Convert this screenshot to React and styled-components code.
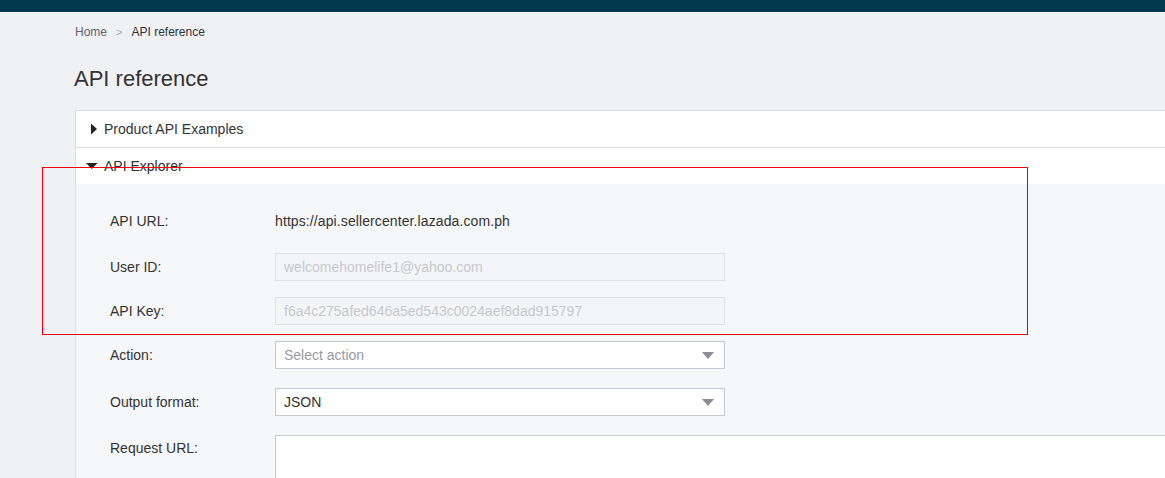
import React from "react";
import styled, { createGlobalStyle } from "styled-components";

const GlobalStyle = createGlobalStyle`
  html, body {
    margin: 0;
    padding: 0;
    overflow: hidden;
    background: #f0f1f5;
    font-family: "Liberation Sans", Arial, sans-serif;
    color: #333;
  }
`;

const Page = styled.div`
  position: relative;
  width: 1165px;
  height: 478px;
  overflow: hidden;
`;

const TopBar = styled.div`
  height: 12px;
  background: #013a4e;
`;

const Main = styled.div`
  padding-left: 74px;
`;

const Breadcrumb = styled.div`
  display: flex;
  align-items: center;
  column-gap: 9px;
  padding: 8px 0 0 1px;
  height: 24px;
  font-size: 12px;
  line-height: 14px;
`;

const Crumb = styled.span`
  color: ${(p) => (p.$current ? "#333" : "#61637a")};
`;

const Sep = styled.span`
  color: #a5a6b0;
  font-size: 11px;
`;

const Title = styled.h1`
  margin: 0;
  padding-top: 22px;
  height: 44px;
  font-size: 22px;
  line-height: 26px;
  font-weight: 400;
  color: #333;
`;

const Panel = styled.div`
  width: 1120px;
  margin-left: 1px;
  background: #fff;
  border: 1px solid #dcdde2;
`;

const Header = styled.div`
  display: flex;
  align-items: center;
  column-gap: 6px;
  height: 36px;
  padding-left: 10px;
  font-size: 14px;
  color: #333;
  border-top: ${(p) => (p.$divider ? "1px solid #dcdde2" : "none")};
`;

const Caret = ({ open }) => (
  <svg width="12" height="12" viewBox="0 0 12 12">
    {open ? (
      <polygon points="0,3 11.5,3 5.75,9" fill="#222" />
    ) : (
      <polygon points="5,0.5 11,6 5,11.5" fill="#222" />
    )}
  </svg>
);

const Body = styled.div`
  background: #f6f7f9;
  padding: 23px 0 40px 34px;
`;

const Row = styled.div`
  display: grid;
  grid-template-columns: 165px auto;
  align-items: center;
  min-height: 28px;
  margin-bottom: ${(p) => p.$gap}px;
  font-size: 14px;
`;

const Label = styled.div`
  color: #333;
  align-self: ${(p) => (p.$top ? "start" : "center")};
  padding-top: ${(p) => (p.$top ? "5px" : "0")};
`;

const Value = styled.div`
  color: #333;
  letter-spacing: 0.1px;
`;

const ReadOnly = styled.div`
  box-sizing: border-box;
  width: 450px;
  height: 28px;
  padding: 0 8px;
  display: flex;
  align-items: center;
  background: #f4f5f7;
  border: 1px solid #e1e2e7;
  color: #c8c9ce;
`;

const Select = styled.div`
  box-sizing: border-box;
  width: 450px;
  height: 28px;
  padding: 0 10px 0 8px;
  display: flex;
  align-items: center;
  justify-content: space-between;
  background: #fff;
  border: 1px solid #c6c7d0;
  color: ${(p) => (p.$placeholder ? "#9a9aa2" : "#333")};
`;

const Arrow = styled.span`
  width: 0;
  height: 0;
  border-left: 6px solid transparent;
  border-right: 6px solid transparent;
  border-top: 7px solid #8c8d96;
`;

const TextArea = styled.div`
  box-sizing: border-box;
  width: 900px;
  height: 90px;
  background: #fff;
  border: 1px solid #c6c7d0;
`;

const Highlight = styled.div`
  position: absolute;
  left: 42px;
  top: 167px;
  width: 986px;
  height: 168px;
  box-sizing: border-box;
  border: 1px solid #e8000b;
  pointer-events: none;
`;

export default function App() {
  return (
    <Page>
      <GlobalStyle />
      <TopBar />
      <Main>
        <Breadcrumb>
          <Crumb>Home</Crumb>
          <Sep>&gt;</Sep>
          <Crumb $current>API reference</Crumb>
        </Breadcrumb>
        <Title>API reference</Title>
        <Panel>
          <Header>
            <Caret />
            Product API Examples
          </Header>
          <Header $divider>
            <Caret open />
            API Explorer
          </Header>
          <Body>
            <Row $gap={18}>
              <Label>API URL:</Label>
              <Value>https://api.sellercenter.lazada.com.ph</Value>
            </Row>
            <Row $gap={16}>
              <Label>User ID:</Label>
              <ReadOnly>welcomehomelife1@yahoo.com</ReadOnly>
            </Row>
            <Row $gap={16}>
              <Label>API Key:</Label>
              <ReadOnly>f6a4c275afed646a5ed543c0024aef8dad915797</ReadOnly>
            </Row>
            <Row $gap={19}>
              <Label>Action:</Label>
              <Select $placeholder>
                Select action
                <Arrow />
              </Select>
            </Row>
            <Row $gap={19}>
              <Label>Output format:</Label>
              <Select>
                JSON
                <Arrow />
              </Select>
            </Row>
            <Row $gap={0}>
              <Label $top>Request URL:</Label>
              <TextArea />
            </Row>
          </Body>
        </Panel>
      </Main>
      <Highlight />
    </Page>
  );
}
